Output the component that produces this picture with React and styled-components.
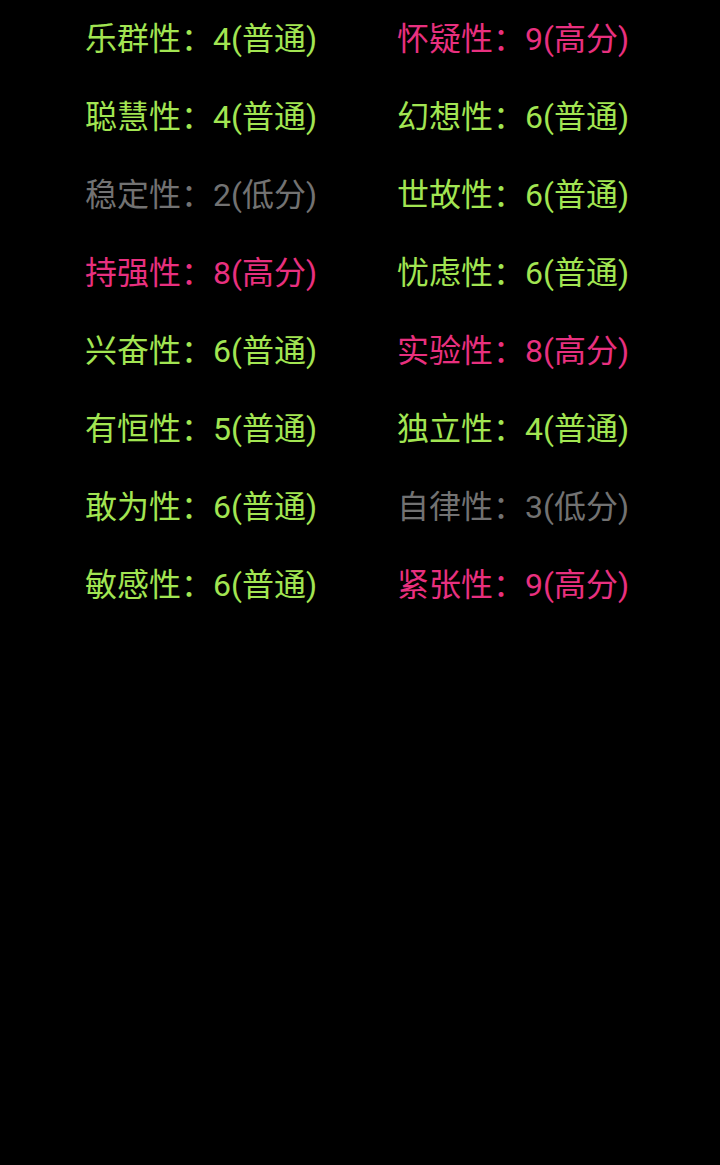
import React from "react";
import styled, { createGlobalStyle } from "styled-components";

const Global = createGlobalStyle`
  html, body { margin: 0; padding: 0; background: #000; }
  body { font-family: Roboto, "Noto Sans CJK SC", sans-serif; }
`;

const Page = styled.div`
  width: 720px;
  min-height: 1165px;
  background: #000;
`;

const Grid = styled.div`
  display: grid;
  grid-template-columns: 312px 312px;
  grid-auto-rows: 78px;
  padding-left: 85px;
`;

const colors = { mid: "#a2e552", high: "#e8307f", low: "#727272" };

const Item = styled.div`
  display: flex;
  align-items: center;
  padding-bottom: 1px;
  font-size: 32px;
  line-height: 1;
  color: ${(p) => colors[p.$level]};
  white-space: pre;
`;

const data = [
  ["乐群性", 4, "普通"], ["怀疑性", 9, "高分"],
  ["聪慧性", 4, "普通"], ["幻想性", 6, "普通"],
  ["稳定性", 2, "低分"], ["世故性", 6, "普通"],
  ["持强性", 8, "高分"], ["忧虑性", 6, "普通"],
  ["兴奋性", 6, "普通"], ["实验性", 8, "高分"],
  ["有恒性", 5, "普通"], ["独立性", 4, "普通"],
  ["敢为性", 6, "普通"], ["自律性", 3, "低分"],
  ["敏感性", 6, "普通"], ["紧张性", 9, "高分"],
];

const levelOf = (l) => (l === "高分" ? "high" : l === "低分" ? "low" : "mid");

export default function App() {
  return (
    <Page>
      <Global />
      <Grid>
        {data.map(([name, score, label]) => (
          <Item key={name} $level={levelOf(label)}>
            {`${name}：${score}(${label})`}
          </Item>
        ))}
      </Grid>
    </Page>
  );
}
